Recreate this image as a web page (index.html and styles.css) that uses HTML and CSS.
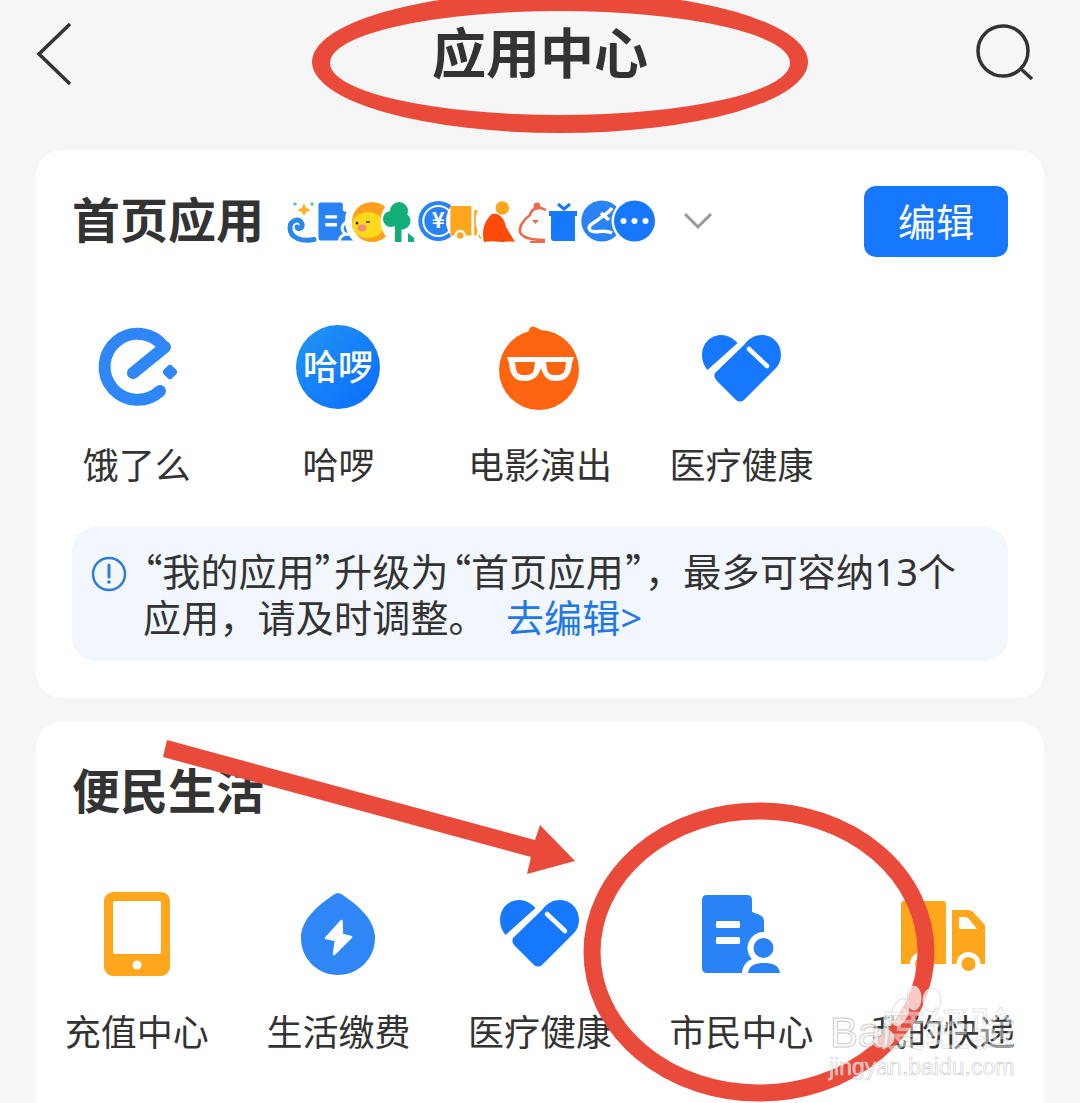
FILE: index.html
```html
<!DOCTYPE html>
<html lang="zh-CN">
<head>
    <meta charset="UTF-8">
    <meta name="viewport" content="width=device-width, initial-scale=1.0">
    <title>应用中心</title>
    <link rel="stylesheet" href="styles.css">
</head>
<body>
    <!-- shared icons, used at full size in the grids and small in the strip -->
    <svg class="defs" width="0" height="0">
        <defs>
            <symbol id="ic-heart" viewBox="0 0 90 90">
                <path fill="#1677ff" d="M40.500 20C36 15 30 12 24.500 12C13 12 5 21 5 32C5 38 7 43 10.500 47Z"/>
                <path fill="#1677ff" d="M18 50L47 22C52 15 58 12 65 12C76 12 84 21 84 32C84 37 82 42 79 45L47 77Q43 80 39 77L20 58Q16 54 18 50Z"/>
                <path d="M52 26L70 43" stroke="#fff" stroke-width="4.500" stroke-linecap="round" fill="none"/>
            </symbol>
            <symbol id="ic-doc" viewBox="0 0 90 90">
                <path fill="#2a82f7" d="M10 7H50Q55 7 55 12V24L63 27Q67 29 67 33V85H10Q5 85 5 80V12Q5 7 10 7Z"/>
                <rect x="19" y="33" width="24" height="7" rx="1.500" fill="#fff"/>
                <rect x="19" y="49" width="24" height="7" rx="1.500" fill="#fff"/>
                <circle cx="66.500" cy="60" r="16" fill="#fff"/>
                <path d="M51 85C52 77 59 75 67 75C75 75 82 77 83 85Z" fill="#fff" stroke="#fff" stroke-width="12"/>
                <circle cx="66.500" cy="60" r="10" fill="#2a82f7"/>
                <path d="M51 85C52 77 59 75 67 75C75 75 82 77 83 85Z" fill="#2a82f7"/>
            </symbol>
            <symbol id="ic-truck" viewBox="0 0 90 90">
                <path fill="#ffa61c" d="M6 13H45Q48 13 48 16V76H3V16Q3 13 6 13Z"/>
                <path fill="#ffa61c" d="M54 22H70Q73 22 75 24L87 37V76H54Z"/>
                <path fill="#fff" d="M61 29H67Q69 29 71 31L79 41H63Q61 41 61 39Z"/>
                <circle cx="70.500" cy="76" r="12" fill="#fff"/>
                <circle cx="70.500" cy="76" r="7" fill="#ffa61c"/>
                <circle cx="24" cy="76" r="12" fill="#fff"/>
                <circle cx="24" cy="76" r="7" fill="#ffa61c"/>
            </symbol>
        </defs>
    </svg>

    <div class="page">
        <header class="nav">
            <svg class="nav-icon nav-icon-back" width="36" height="64" viewBox="0 0 36 64">
                <path d="M34 2L3 32L34 62" fill="none" stroke="#333" stroke-width="3.500"/>
            </svg>
            <h1>应用中心</h1>
            <svg class="nav-icon nav-icon-end" width="60" height="60" viewBox="0 0 60 60">
                <circle cx="29" cy="27" r="25" fill="none" stroke="#333" stroke-width="3.500"/>
                <path d="M47 45L58 55" stroke="#333" stroke-width="3.500"/>
            </svg>
        </header>

        <section class="card">
            <div class="card-head">
                <h2>首页应用</h2>
                <!-- overlapping thumbnails of the pinned apps -->
                <svg class="strip" width="370" height="44" viewBox="0 0 370 44">
                    <path d="M27 39.500C15 42 3 38 3 28C3 20 13 17 15 24C16 29 10 30 10 27" fill="none" stroke="#2b87ea" stroke-width="5" stroke-linecap="round"/>
                    <path d="M17 3L19 8L24 10L19 12L17 16L15 12L10 10L15 8Z" fill="#ffb020"/>
                    <circle cx="8" cy="4" r="1.800" fill="#6fc2a0"/>
                    <circle cx="25" cy="4" r="1.800" fill="#6fc2a0"/>

                    <circle cx="53.200" cy="21" r="25" fill="#fff"/>
                    <use href="#ic-doc" x="29" y="-1" width="44" height="44"/>

                    <circle cx="85.900" cy="21" r="28" fill="#fff"/>
                    <circle cx="85" cy="22" r="20" fill="#ff9f1c"/>
                    <ellipse cx="81" cy="25" rx="16" ry="13" fill="#ffd91a"/>
                    <circle cx="70" cy="23" r="1.500" fill="#333"/>
                    <path d="M79 22l4 0" stroke="#333" stroke-width="1.500"/>
                    <ellipse cx="75" cy="28" rx="4.500" ry="3.500" fill="#f58b7a"/>

                    <circle cx="118.600" cy="21" r="25" fill="#fff"/>
                    <circle cx="104" cy="19" r="8" fill="#12ae78"/>
                    <circle cx="112" cy="11" r="9" fill="#12ae78"/>
                    <circle cx="115" cy="21" r="8.500" fill="#12ae78"/>
                    <rect x="108" y="22" width="6.500" height="20" fill="#12ae78"/>
                    <path d="M121 42V33L127 38V42Z" fill="#12ae78"/>

                    <circle cx="151.300" cy="21" r="25" fill="#fff"/>
                    <circle cx="151.300" cy="21" r="20" fill="#2a82f7"/>
                    <circle cx="151.300" cy="21" r="15" fill="none" stroke="#fff" stroke-width="2"/>
                    <text class="strip-yen" x="151.300" y="28">¥</text>

                    <circle cx="184" cy="21" r="25" fill="#fff"/>
                    <use href="#ic-truck" x="162" y="0" width="42" height="42"/>

                    <circle cx="216.700" cy="21" r="28" fill="#fff"/>
                    <circle cx="215.300" cy="8" r="6.800" fill="#ffa61c"/>
                    <path d="M197 42C194 30 198 20 205 14C213 12 218 20 219 27L228 42C222 41 218 42 214 42C208 41 202 41 197 42Z" fill="#ff4a0a"/>

                    <circle cx="249.400" cy="21" r="25" fill="#fff"/>
                    <path d="M259 10C250 5 244 10 243 15C236 20 232 27 233 32C235 38 245 40 258 40" fill="none" stroke="#e96b4a" stroke-width="2.500"/>
                    <circle cx="250" cy="6" r="3.500" fill="#e96b4a"/>
                    <path d="M245 20H252L248.500 24Z" fill="#e96b4a"/>
                    <path d="M243 42H258" stroke="#e96b4a" stroke-width="2"/>

                    <circle cx="282.100" cy="21" r="25" fill="#fff"/>
                    <path d="M262 11H290V16H288V41H267Q264 41 264 38V16H262Z" fill="#1677ff"/>
                    <path d="M271 4L277 9L283 4" fill="none" stroke="#1677ff" stroke-width="3"/>

                    <circle cx="314.800" cy="21" r="24" fill="#fff"/>
                    <circle cx="314.800" cy="21" r="20.500" fill="#2a82f7"/>
                    <path d="M325 8C321 14 318 14 312 19C306 24 300 25 303 30C307 35 316 28 325 33M314 13L322 20" fill="none" stroke="#fff" stroke-width="3.500"/>

                    <circle cx="347.500" cy="21" r="23" fill="#fff"/>
                    <circle cx="347.500" cy="21" r="20.500" fill="#1677ff"/>
                    <circle cx="336.500" cy="21" r="3" fill="#fff"/>
                    <circle cx="347.500" cy="21" r="3" fill="#fff"/>
                    <circle cx="358.500" cy="21" r="3" fill="#fff"/>
                </svg>
                <svg class="strip-more" width="30" height="18" viewBox="0 0 30 18">
                    <path d="M2 2L15 15L28 2" fill="none" stroke="#999" stroke-width="3"/>
                </svg>
                <button class="edit-btn" type="button">编辑</button>
            </div>

            <div class="apps">
                <div class="app">
                    <svg class="app-icon" viewBox="0 0 90 90">
                        <path d="M72 24A33 33 0 1 0 68 68" fill="none" stroke="#2f86f6" stroke-width="12" stroke-linecap="round"/>
                        <path d="M73 24L41 50" fill="none" stroke="#2f86f6" stroke-width="12" stroke-linecap="round"/>
                        <rect x="72" y="43" width="12" height="12" rx="3.500" fill="#2f86f6" transform="rotate(45 78 49)"/>
                    </svg>
                    <span>饿了么</span>
                </div>
                <div class="app">
                    <svg class="app-icon" viewBox="0 0 90 90">
                        <defs>
                            <linearGradient id="hello-bg" x1="0" y1="0" x2="1" y2="1">
                                <stop offset="0" stop-color="#2196f3"/>
                                <stop offset="1" stop-color="#0a6cff"/>
                            </linearGradient>
                        </defs>
                        <circle cx="45" cy="44" r="42" fill="url(#hello-bg)"/>
                        <text class="hello-text" x="45" y="57">哈啰</text>
                    </svg>
                    <span>哈啰</span>
                </div>
                <div class="app">
                    <svg class="app-icon" viewBox="0 0 90 90">
                        <circle cx="44" cy="47" r="40" fill="#ff6410"/>
                        <path d="M30 12C35 9 33 5 37 3.500C41 3 44 8 56 10Z" fill="#ff6410"/>
                        <path fill="#fff" fill-rule="evenodd" d="M12 34H79L77 40C76 52 72 58 60 58C52 58 48 52 46 45C44 52 39 58 30 58C19 58 15 52 14 40ZM20 39L21 46Q22 52 28 52H31Q38 52 39 46L40 39ZM51 39L52 46Q53 52 59 52H62Q69 52 70 46L71 39Z"/>
                    </svg>
                    <span>电影演出</span>
                </div>
                <div class="app">
                    <svg class="app-icon"><use href="#ic-heart"/></svg>
                    <span>医疗健康</span>
                </div>
            </div>

            <div class="notice">
                <svg class="notice-icon" width="36" height="36" viewBox="0 0 36 36">
                    <circle cx="18" cy="18" r="16" fill="none" stroke="#2f7bd8" stroke-width="2.500"/>
                    <path d="M18 9V21" stroke="#2f7bd8" stroke-width="3" stroke-linecap="round"/>
                    <circle cx="18" cy="26" r="1.800" fill="#2f7bd8"/>
                </svg>
                <p><span class="quote">“</span>我的应用<span class="quote">”</span>升级为<span class="quote quote-mid">“</span>首页应用<span class="quote quote-end">”</span>，最多可容纳13个应用，请及时调整。 <a href="#">去编辑&gt;</a></p>
            </div>
        </section>

        <section class="card card-life">
            <div class="card-head card-head-plain">
                <h2>便民生活</h2>
            </div>
            <div class="apps apps-life">
                <div class="app">
                    <svg class="app-icon" viewBox="0 0 90 90">
                        <rect x="12" y="4" width="66" height="84" rx="9" fill="#ffa61c"/>
                        <rect x="21" y="13" width="48" height="53" rx="2" fill="#fff"/>
                        <circle cx="45" cy="77" r="4.500" fill="#fff"/>
                    </svg>
                    <span>充值中心</span>
                </div>
                <div class="app">
                    <svg class="app-icon" viewBox="0 0 90 90">
                        <path fill="#2f86f6" d="M41 6.500Q45 3.500 49 6.500C66 18 82 32 82 50C82 71 65 87 45 87C25 87 8 71 8 50C8 32 24 18 41 6.500Z"/>
                        <path fill="#fff" stroke="#fff" stroke-width="2.500" stroke-linejoin="round" d="M48.500 33L33 50L43 52L41 66L58 49L49 47Z"/>
                    </svg>
                    <span>生活缴费</span>
                </div>
                <div class="app">
                    <svg class="app-icon"><use href="#ic-heart"/></svg>
                    <span>医疗健康</span>
                </div>
                <div class="app">
                    <svg class="app-icon"><use href="#ic-doc"/></svg>
                    <span>市民中心</span>
                </div>
                <div class="app">
                    <svg class="app-icon"><use href="#ic-truck"/></svg>
                    <span>我的快递</span>
                </div>
            </div>
        </section>

        <!-- hand-drawn marks and the site stamp sit over everything -->
        <svg class="marks" width="1080" height="1103" viewBox="0 0 1080 1103">
            <path fill="#ea4a3a" fill-rule="evenodd" d="M312 62A248 71 0 1 0 808 62A248 71 0 1 0 312 62ZM330 63A230 52 0 1 1 790 63A230 52 0 1 1 330 63Z"/>
            <path fill="#ea4a3a" d="M167 740L535 840L540 825L575 861L527 874L531 857L163 757Z"/>
            <ellipse cx="759" cy="952" rx="167" ry="141" fill="none" stroke="#ea4a3a" stroke-width="17"/>
            <g class="stamp-paw">
                <ellipse cx="900" cy="1012" rx="8" ry="14" transform="rotate(20 900 1012)"/>
                <ellipse cx="914" cy="998" rx="7" ry="12"/>
                <ellipse cx="932" cy="1000" rx="9" ry="12"/>
                <ellipse cx="884" cy="1038" rx="10" ry="9"/>
            </g>
            <text class="stamp-name" x="830" y="1047">Bai</text>
            <text class="stamp-cn" x="880" y="1046">度经验</text>
            <text class="stamp-url" x="829" y="1075">jingyan.baidu.com</text>
        </svg>
    </div>
</body>
</html>
```

FILE: styles.css
```css
* {
    box-sizing: border-box;
}
body {
    margin: 0;
    background-color: #f6f6f6;
    font-family: "Noto Sans CJK SC", "Noto Sans", sans-serif;
    color: #333;
}
h1, h2, p {
    margin: 0;
}
.defs {
    position: absolute;
}
.page {
    position: relative;
    width: 1080px;
    height: 1103px;
    overflow: hidden;
}
.nav {
    display: grid;
    grid-template-columns: 1fr auto 1fr;
    align-items: center;
    height: 150px;
    padding: 0 46px 42px;
}
.nav h1 {
    margin-bottom: 6px;
    font-size: 54px;
    line-height: 64px;
    font-weight: 700;
}
.nav-icon {
    display: block;
}
.nav-icon-back {
    margin-left: -10px;
}
.nav-icon-end {
    justify-self: end;
}
.card {
    margin: 0 36px 24px;
    padding-bottom: 37px;
    background-color: #fff;
    border-radius: 26px;
}
.card-life {
    padding-bottom: 80px;
}
.card-head {
    display: flex;
    align-items: center;
    padding: 36px 36px 0;
}
.card-head h2 {
    margin-bottom: 9px;
    font-size: 48px;
    line-height: 60px;
    font-weight: 700;
}
.strip {
    margin-left: 23px;
}
.strip-more {
    margin: 0 auto 1px 26px;
}
.strip-yen {
    font-size: 22px;
    font-weight: 700;
    fill: #fff;
    text-anchor: middle;
}
.edit-btn {
    width: 144px;
    height: 71px;
    padding: 0 0 4px;
    border: none;
    border-radius: 12px;
    background-color: #1677ff;
    color: #fff;
    font-family: inherit;
    font-size: 38px;
}
.apps {
    display: grid;
    grid-template-columns: repeat(5, 1fr);
    margin-top: 66px;
}
.apps-life {
    margin-top: 61px;
}
.app {
    display: flex;
    flex-direction: column;
    align-items: center;
    gap: 27px;
    font-size: 36px;
    line-height: 46px;
    white-space: nowrap;
}
.apps-life .app {
    gap: 29px;
}
.app-icon {
    display: block;
    width: 90px;
    height: 90px;
}
.hello-text {
    font-size: 35px;
    font-weight: 500;
    fill: #fff;
    text-anchor: middle;
}
.notice {
    display: flex;
    gap: 16px;
    margin: 41px 36px 0;
    padding: 21px 44px 21px 19px;
    background-color: #f2f6fd;
    border-radius: 24px;
    font-family: "Noto Sans", "Noto Sans CJK SC", sans-serif;
    font-size: 38px;
    line-height: 46px;
    letter-spacing: 0.2px;
}
.notice-icon {
    flex-shrink: 0;
    margin-top: 8px;
}
/* CJK quote glyphs, set tight so they don't take a full em */
.quote {
    font-family: "Noto Sans CJK SC", sans-serif;
    font-feature-settings: "palt";
    line-height: 1;
}
.quote-mid {
    margin-left: 3px;
}
.quote-end {
    margin-left: 2px;
}
.notice a {
    margin-left: 9px;
    color: #1f78e6;
    text-decoration: none;
}
.marks {
    position: absolute;
    top: 0;
    left: 0;
}
.stamp-paw {
    fill: rgba(255, 255, 255, 0.7);
    stroke: #ddd;
}
.stamp-name {
    font-family: "Liberation Sans", sans-serif;
    font-size: 42px;
    fill: rgba(255, 255, 255, 0.5);
    stroke: #ccc;
}
.stamp-cn {
    font-size: 45px;
    fill: rgba(255, 255, 255, 0.45);
    stroke: rgba(200, 200, 200, 0.5);
}
.stamp-url {
    font-family: "Liberation Sans", sans-serif;
    font-size: 23px;
    fill: rgba(255, 255, 255, 0.6);
    stroke: #ccc;
    stroke-width: 0.6;
}
```
